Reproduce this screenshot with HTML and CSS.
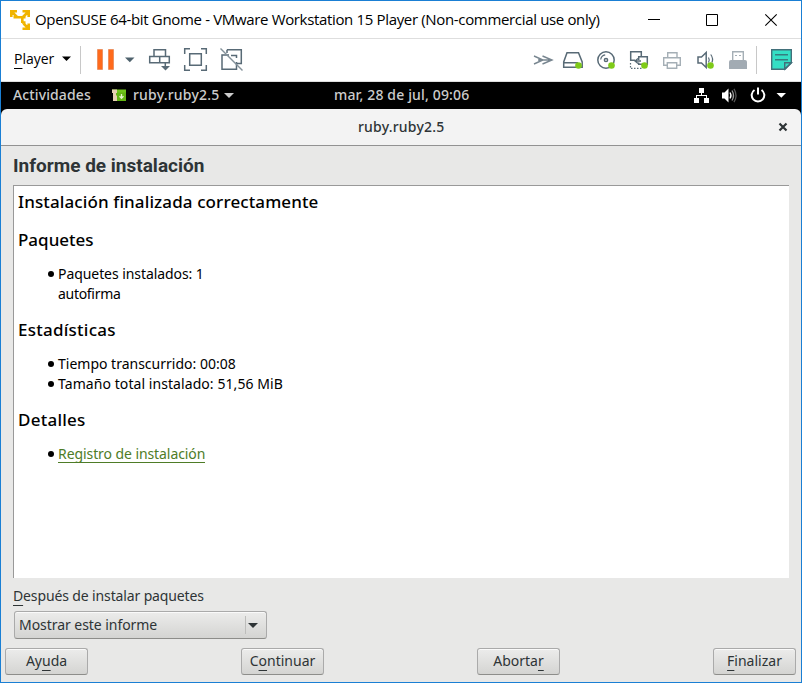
FILE: index.html
```html
<!DOCTYPE html>
<html lang="es">
<head>
<meta charset="utf-8">
<title>OpenSUSE 64-bit Gnome - VMware Workstation 15 Player</title>
<link rel="stylesheet" href="styles.css">
</head>
<body>
<div class="window">
  <header class="titlebar">
    <svg class="logo" width="22" height="22" viewBox="9 8 22 22"><g fill="none" stroke="#f0b400" stroke-width="2.6"><path d="M11.300 16V10.300H17M22.500 10.300H28.700V16M28.700 22.500V27.700H22.500M11.500 10.500l5.500 5.500M28.500 10.500l-5.500 5.500M28.500 27.500l-5-5"/><path d="M13.500 16.300H25.500M22.300 15V22M22 21.500H25.500"/></g></svg>
    <span class="wintitle">OpenSUSE 64-bit Gnome - VMware Workstation 15 Player (Non-commercial use only)</span>
    <svg class="winctl" width="140" height="20" viewBox="645 9 140 20"><g fill="none" stroke="#000"><path d="M648 18.500H660M706.500 13.500H717.500V24.500H706.500Z"/><path d="M765.300 13.300l11.400 11.400M776.700 13.300l-11.400 11.400" stroke-width="1.100"/></g></svg>
  </header>
  <nav class="toolbar">
    <span class="player"><u>P</u>layer</span>
    <svg class="tools" width="186" height="30" viewBox="60 45 186 30">
      <path d="M62 56.500h9l-4.500 4.500Z" fill="#000"/>
      <path d="M80.500 46V74" stroke="#c8c8c8"/>
      <path d="M97.500 49.500h5v20h-5ZM108.500 49.500h5v20h-5Z" fill="#ff6a1c" stroke="#e07b45" stroke-width=".6"/>
      <path d="M125 57.500h9.500l-4.700 4.800Z" fill="#4f626d"/>
      <g fill="none" stroke="#586a76" stroke-width="1.500">
        <path d="M154 56.500V49.700H165.500V56.500M149.700 56.500H169.300V62.700H149.700ZM159.700 56.500V62.700M165.300 62.700V69"/>
        <path d="M161 66h9l-4.500 4.600Z" fill="#586a76" stroke="none"/>
        <path d="M184.700 54V48.700H190M201 48.700H206.300V54M206.300 65V70.300H201M190 70.300H184.700V65M189.700 53.700H201.300V65.300H189.700Z"/>
        <path d="M227 49.700H241.300V63.500H237M229 55H222V69.300H236.500V62M227 49.700V53M231 55.500H236.500V58"/>
        <path d="M220.500 48.500L242.500 70.500" stroke="#84919a"/>
      </g>
    </svg>
    <svg class="devices" width="264" height="30" viewBox="530 45 264 30">
      <g fill="none" stroke="#788690" stroke-width="1.400"><path d="M534 56l9 4-9 4M542.500 56l9.500 4-9.500 4M538 60H551"/></g>
      <g fill="none" stroke="#586a76" stroke-width="1.500">
        <path d="M567 52.700H578.500L582.200 62V67.300H563.700V62ZM563.700 62.700H578"/>
        <circle cx="606" cy="60" r="8.200"/><circle cx="606" cy="60" r="1.600"/><path d="M600.700 59.500a5.500 5.500 0 0 1 4.500-4.700" stroke-width="1.200"/>
        <path d="M635 60.300H630.700V51.700H641.300V56M638.700 60V56.700H647.300V64.300H638.700V62.500"/><path d="M641 61h-6M638 58.500l-3 2.500 3 2.500" stroke-width="1.300"/>
        <path d="M630.500 63V69M631 68.300H643" stroke-dasharray="1.500 1.500" stroke-width="1.200"/>
        <path d="M698 57H701.500L706.200 52.500V67.500L701.500 63H698Z"/><path d="M708.500 57.500q1.500 2.500 0 5M710.700 54.500q3 4 1.200 8" stroke-width="1.200"/>
      </g>
      <g fill="none" stroke="#a5afb6" stroke-width="1.400"><path d="M667.700 57V52.700H677V57M667 65.300H663.700V57.700H680.300V65.300H677M667.300 62.700H676.700V68.300H667.300Z"/></g>
      <path d="M732.700 61V51.700H743.300V61" fill="#fff" stroke="#a5afb6" stroke-width="1.400"/><path d="M735 55.500h2M739 55.500h2" stroke="#a5afb6"/>
      <path d="M729 69V62q0-2 2-2H745q2 0 2 2V69Z" fill="#a2abb3"/>
      <g fill="#7fca18"><circle cx="578.500" cy="65.500" r="3.300"/><circle cx="611.500" cy="65.500" r="3.300"/><circle cx="644.500" cy="65.500" r="3.300"/><circle cx="710.500" cy="65.500" r="3.300"/></g>
      <path d="M756.500 46V74" stroke="#c8c8c8"/>
      <path d="M771.700 49.700H791.300V63L785 69.300H771.700Z" fill="#34dfc5" stroke="#42707a" stroke-width="1.400"/>
      <path d="M775 54.700H788M775 59.700H788" stroke="#367d80" stroke-width="1.400"/><path d="M784.700 69V62.700H791.300Z" fill="#34dfc5" stroke="#42707a" stroke-width="1.400"/>
    </svg>
  </nav>
  <div class="gnome">
    <span class="act">Actividades</span>
    <svg class="yast" width="15" height="13" viewBox="112 89 15 13"><path d="M114 91H126V101H114Z" fill="#63b514"/><path d="M112 89.500h14v3h-14Z" fill="#70c51b"/><path d="M112 89.500h5v3.500h-1v2l1 1v5h-4v-8h-1Z" fill="#e6cfb1"/><path d="M121.500 94v4M119.500 96.300l2 2 2-2" fill="none" stroke="#e4f4cd" stroke-width="1.300"/></svg>
    <span class="app">ruby.ruby2.5</span><i class="caret"></i>
    <span class="clock">mar, 28 de jul, 09:06</span>
    <svg class="tray" width="96" height="20" viewBox="692 86 96 20">
      <path d="M699 88h5v5h-5ZM694 98h5v5h-5ZM704 98h5v5h-5ZM701 93h1v2h5v3h-1v-2h-9v2h-1v-3h5Z" fill="#fff"/>
      <path d="M722 92.500h2.500l4-4v14l-4-4H722Z" fill="#fff"/><path d="M730 92.500q2 3 0 6" fill="none" stroke="#fff" stroke-width="1.300"/><path d="M732 90.500q3 5 0 10" fill="none" stroke="#999" stroke-width="1.300"/><path d="M734 88.800q4 6.700 0 13.400" fill="none" stroke="#555" stroke-width="1.300"/>
      <path d="M754.500 90a6.300 6.300 0 1 0 7 0M758 87.500v7" fill="none" stroke="#fff" stroke-width="2"/>
      <path d="M776.500 93h9.500l-4.700 4.800Z" fill="#fff"/>
    </svg>
  </div>
  <div class="frame"><div class="headerbar"><span class="dlgtitle">ruby.ruby2.5</span>
    <svg class="close" width="10" height="10" viewBox="0 0 10 10"><path d="M1.500 1.500l7 7M8.500 1.500l-7 7" stroke="#2e3436" stroke-width="2.200"/></svg>
  </div></div>
  <main class="body">
    <h1><span>Informe de instalación</span></h1>
    <section class="report">
      <h2><span class="h-a">Instalación finalizada correctamente</span></h2>
      <h2><span class="h-b">Paquetes</span></h2>
      <ul><li><span class="l-a">Paquetes instalados: 1</span><br><span class="l-b">autofirma</span></li></ul>
      <h2><span class="h-c">Estadísticas</span></h2>
      <ul><li><span class="l-c">Tiempo transcurrido: 00:08</span></li><li><span class="l-d">Tamaño total instalado: 51,56 MiB</span></li></ul>
      <h2><span class="h-d">Detalles</span></h2>
      <ul><li><a class="l-e">Registro de instalación</a></li></ul>
    </section>
    <label class="after"><u>D</u>espués de instalar paquetes</label>
    <div class="select"><span>Mostrar este informe</span><i class="caret dark"></i></div>
    <footer><button>Ay<u>u</u>da</button><button>C<u>o</u>ntinuar</button><button>Aborta<u>r</u></button><button><u>F</u>inalizar</button></footer>
  </main>
</div>
</body>
</html>
```
FILE: styles.css
```css
*{box-sizing:border-box}
body{margin:0;font-family:"Noto Sans",sans-serif;font-size:14px;color:#2e3436}
svg{display:block;flex:none}
.window{width:802px;height:683px;border:1px solid #1a7fd4;background:#e8e8e7;display:flex;flex-direction:column;overflow:hidden}
.window span,.after{white-space:nowrap}
.titlebar{height:37px;background:#fff;display:flex;align-items:center;padding-left:8px}
.wintitle{font:15px/20px "Open Sans",sans-serif;letter-spacing:-.34px;color:#000;margin-left:4px;padding-bottom:2px;width:610px}
.toolbar{height:44px;background:#fff;border-top:1px solid #dedede;border-bottom:1px solid #dedede;display:flex;align-items:center}
.player{font:14px/20px "Open Sans",sans-serif;color:#000;margin-left:13px;padding-bottom:2px;width:46px}
.devices{margin-left:284px}
u{text-decoration:underline;text-decoration-thickness:1px;text-underline-offset:4px}
.gnome{height:27px;background:#000;color:#ccc;display:flex;align-items:center;font-weight:500}
.gnome span{padding-bottom:2px}
.act{margin-left:12px;width:99px;letter-spacing:.12px}
.app{margin-left:6px;width:87px;letter-spacing:.2px}
.caret{border:5px solid transparent;border-top-color:#ccc;border-bottom:0;margin-left:4px}
.clock{margin-left:100px;width:358px;letter-spacing:.16px}
.frame{background:#000}
.headerbar{height:37px;background:#f3f3f3;border-bottom:1px solid #929292;border-radius:6px 6px 0 0;display:flex;align-items:center;padding-left:357px;font-weight:500}
.dlgtitle{width:420px;padding-bottom:2px;letter-spacing:.2px}
.body{flex:1;display:flex;flex-direction:column}
h1{font:700 19px/24px Roboto,sans-serif;margin:8px 0 7px 12px}
.report{height:393px;width:776px;margin-left:12px;background:#fff;border:solid #999;border-width:1px 0 0 1px;color:#000;padding:5px 4px;line-height:20px}
h2{font:500 17px/22px "Noto Sans",sans-serif;letter-spacing:.11px;margin:0 0 16px}
.h-b{letter-spacing:0}
.h-c,.h-d{letter-spacing:.25px}
ul{margin:-3px 0 15px;padding-left:40px;list-style:none}
li{position:relative}
li::before{content:"";position:absolute;left:-10px;top:7px;width:6px;height:6px;border-radius:50%;background:#000}
.l-a{letter-spacing:-.07px}
.l-b{letter-spacing:-.3px}
.l-d{letter-spacing:.07px}
.l-e{color:#4e7c27;border-bottom:1px solid #4e7c27;letter-spacing:-.08px;line-height:18px;height:19px;padding-top:1px;display:inline-block;vertical-align:top}
.after{margin:8px 0 0 12px;line-height:20px;letter-spacing:-.13px}
.select,button{border:1px solid #aaa;border-bottom-color:#8d8d8a;border-radius:3px;background:linear-gradient(#ececeb,#d4d4d2);box-shadow:inset 0 1px #fafafa}
.select{width:253px;height:28px;margin:5px 0 0 13px;display:flex;align-items:center;padding-left:4px}
.select span{width:226px;padding-bottom:2px;letter-spacing:-.05px}
.select::before{content:"";order:1;width:1px;height:18px;background:#bdbdbb}
.select .caret{order:2;margin-left:2px}
.caret.dark{border-top-color:#2e3436}
footer{display:flex;justify-content:space-between;margin:9px 5px 0 4px}
button{width:83px;height:27px;padding:0 0 2px;font:14px/20px "Noto Sans",sans-serif;color:#2e3436}
```
